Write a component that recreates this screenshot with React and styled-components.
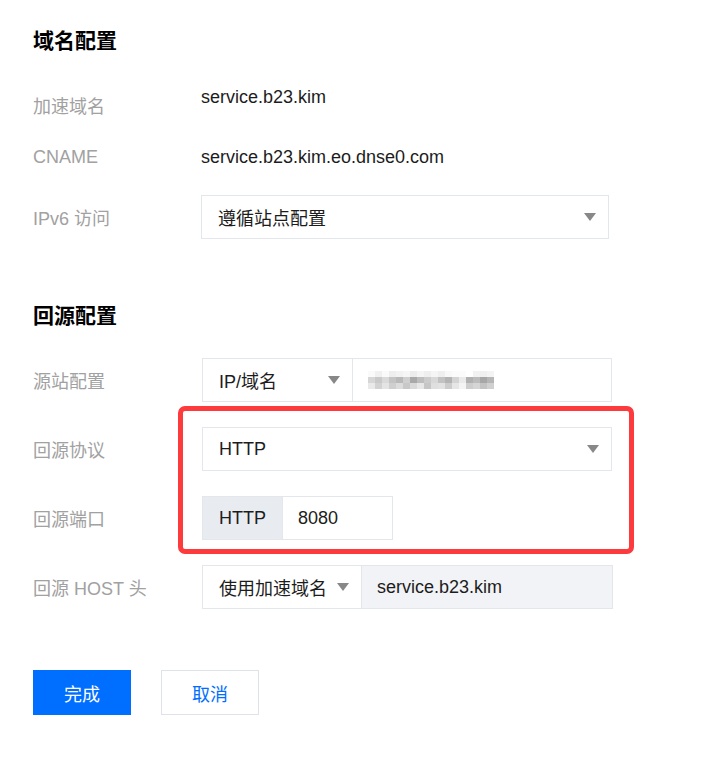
import React from "react";
import styled, { createGlobalStyle } from "styled-components";

const GlobalStyle = createGlobalStyle`
  body {
    margin: 0;
    background: #ffffff;
    font-family: "Liberation Sans", Arial, "Noto Sans CJK SC", sans-serif;
  }
`;

const Page = styled.div`
  width: 703px;
  height: 757px;
  padding: 26px 0 0 33px;
  box-sizing: border-box;
  display: flex;
  flex-direction: column;
`;

const Heading = styled.h2`
  margin: ${(p) => p.$top || 0}px 0 0;
  height: 30px;
  line-height: 30px;
  font-size: 21px;
  font-weight: 700;
  color: #000;
`;

const Row = styled.div`
  display: grid;
  grid-template-columns: 168px auto;
  align-items: center;
  height: ${(p) => p.$height || 44}px;
  margin-top: ${(p) => p.$top || 0}px;
`;

const Label = styled.div`
  font-size: 18px;
  color: #a1a1a1;
  white-space: nowrap;
`;

const Value = styled.div`
  font-size: 18px;
  color: #1c1c1c;
  margin-top: ${(p) => (p.$raise ? -p.$raise * 2 : 0)}px;
`;

const Box = styled.div`
  display: flex;
  height: 44px;
  width: ${(p) => p.$width}px;
  margin-left: ${(p) => p.$shift || 0}px;
  box-sizing: border-box;
  border: 1px solid #e3e6eb;
  background: #fff;
`;

const Select = styled.div`
  display: flex;
  align-items: center;
  gap: 10px;
  justify-content: space-between;
  box-sizing: border-box;
  height: 100%;
  padding: 0 12px 0 16px;
  font-size: 18px;
  color: #1c1c1c;
  white-space: nowrap;
  flex: ${(p) => (p.$width || p.$fit ? "none" : "1")};
  ${(p) => (p.$width ? `width: ${p.$width}px;` : "")}
  ${(p) => (p.$divider ? "border-right: 1px solid #e3e6eb;" : "")}
`;

const Arrow = styled.span`
  width: 0;
  height: 0;
  border-left: 6px solid transparent;
  border-right: 6px solid transparent;
  border-top: 8px solid #888;
  flex: none;
`;

const Addon = styled.div`
  display: flex;
  align-items: center;
  padding: 0 16px;
  background: #e8ebf0;
  border-right: 1px solid #e3e6eb;
  font-size: 18px;
  color: #1c1c1c;
`;

const Input = styled.div`
  flex: 1;
  display: flex;
  align-items: center;
  padding: 0 15px;
  font-size: 18px;
  color: #1c1c1c;
  background: ${(p) => (p.$disabled ? "#f2f3f7" : "#fff")};
`;

const Mosaic = styled.div`
  display: grid;
  grid-template-columns: repeat(18, 7px);
  grid-auto-rows: 6px;
`;

const Cell = styled.span`
  background: ${(p) => p.$c};
`;

const Group = styled.div`
  position: relative;
  display: flex;
  flex-direction: column;
  margin-top: 25px;
  gap: 25px;
`;

const Highlight = styled.div`
  position: absolute;
  left: 145px;
  top: -21px;
  width: 456px;
  bottom: -14px;
  box-sizing: border-box;
  border: 5px solid #fd3a3c;
  border-radius: 7px;
  pointer-events: none;
`;

const Actions = styled.div`
  display: flex;
  gap: 30px;
  margin-top: 61px;
`;

const Button = styled.button`
  width: 98px;
  height: 45px;
  box-sizing: border-box;
  font-family: inherit;
  font-size: 18px;
  border: 1px solid ${(p) => (p.$primary ? "#006eff" : "#dfe2e8")};
  background: ${(p) => (p.$primary ? "#006eff" : "#fff")};
  color: ${(p) => (p.$primary ? "#fff" : "#006eff")};
  padding: 0;
`;

const mosaic = [
  "#fafafa#f0f0f0#fafafa#eeeeee#f2f2f2#f6f6f6#ececec#f4f4f4#eeeeee#f5f5f5#efefef#f8f8f8#fbfbfb#fbfbfb#ffffff#f2f2f2#f0f0f0#f4f4f4",
  "#d6d6d6#c9c9c9#dadada#c4c4c4#b9b9b9#cfcfcf#a9a9a9#bdbdbd#cbcbcb#d8d8d8#c2c2c2#b4b4b4#d4d4d4#eaeaea#b1b1b1#bcbcbc#a7a7a7#b6b6b6",
  "#e9e9e9#d2d2d2#e4e4e4#cfcfcf#dcdcdc#c8c8c8#d9d9d9#e7e7e7#c6c6c6#dfdfdf#e2e2e2#cccccc#e6e6e6#f4f4f4#cdcdcd#d5d5d5#c3c3c3#d0d0d0",
].flatMap((r) => r.split("#").filter(Boolean).map((c) => "#" + c));

export default function App() {
  return (
    <>
      <GlobalStyle />
      <Page>
        <Heading>域名配置</Heading>
        <Row $height={32} $top={33}>
          <Label>加速域名</Label>
          <Value $raise={8}>service.b23.kim</Value>
        </Row>
        <Row $height={32} $top={20}>
          <Label>CNAME</Label>
          <Value>service.b23.kim.eo.dnse0.com</Value>
        </Row>
        <Row $top={22}>
          <Label>IPv6 访问</Label>
          <Box $width={408}>
            <Select>
              遵循站点配置
              <Arrow />
            </Select>
          </Box>
        </Row>

        <Heading $top={62}>回源配置</Heading>
        <Row $top={27}>
          <Label>源站配置</Label>
          <Box $width={410} $shift={1}>
            <Select $width={150} $divider>
              IP/域名
              <Arrow />
            </Select>
            <Input>
              <Mosaic>
                {mosaic.map((c, i) => (
                  <Cell key={i} $c={c} />
                ))}
              </Mosaic>
            </Input>
          </Box>
        </Row>
        <Group>
          <Row>
            <Label>回源协议</Label>
            <Box $width={410} $shift={1}>
              <Select>
                HTTP
                <Arrow />
              </Select>
            </Box>
          </Row>
          <Row>
            <Label>回源端口</Label>
            <Box $width={191} $shift={1}>
              <Addon>HTTP</Addon>
              <Input>8080</Input>
            </Box>
          </Row>
          <Highlight />
        </Group>
        <Row $top={25}>
          <Label>回源 HOST 头</Label>
          <Box $width={411} $shift={1}>
            <Select $divider $fit>
              使用加速域名
              <Arrow />
            </Select>
            <Input $disabled>service.b23.kim</Input>
          </Box>
        </Row>

        <Actions>
          <Button $primary>完成</Button>
          <Button>取消</Button>
        </Actions>
      </Page>
    </>
  );
}
